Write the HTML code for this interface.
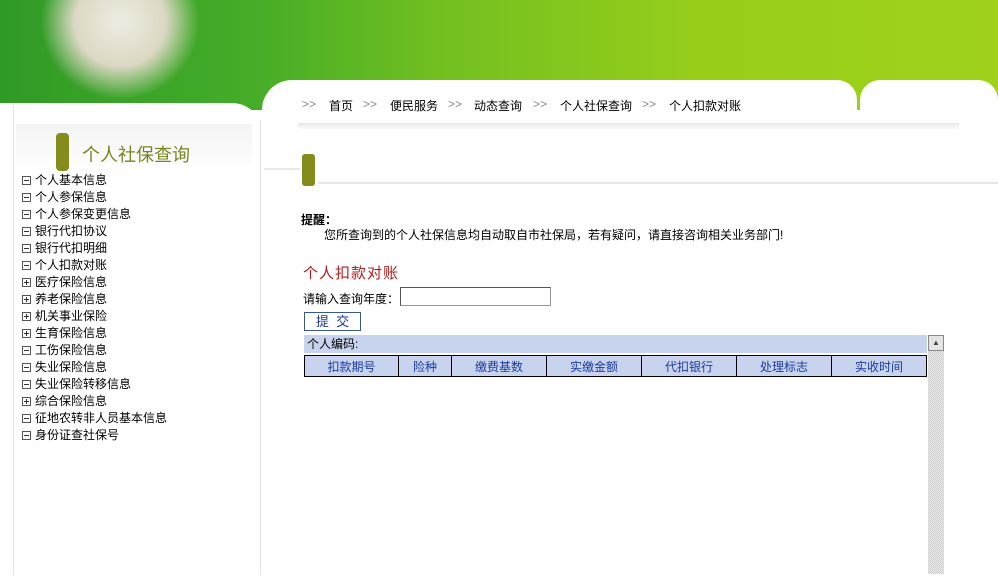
<!DOCTYPE html>
<html><head><meta charset="utf-8"><style>
body{margin:0;width:998px;height:574px;overflow:hidden;background:#fff;font-family:"Liberation Sans","Noto Sans CJK SC",sans-serif;font-size:12px;color:#000;position:relative}
.a{position:absolute}
.menu div{height:17px;line-height:17px;white-space:nowrap}
.bx{display:inline-block;margin-right:4px;vertical-align:-1px;position:relative;box-sizing:border-box;width:9px;height:9px;border:1px solid #555}
.bx:before{content:"";position:absolute;left:1px;right:1px;top:3px;height:1px;background:#333}
.p:after{content:"";position:absolute;top:1px;bottom:1px;left:3px;width:1px;background:#333}
table{border-collapse:collapse}
td{border:1px solid #000;background:#c8d4ee;color:#1a3aa0;text-align:center;height:20px;padding:0;font-size:12px}
.g{color:#888}
</style></head><body>
<div class="a" style="left:0;top:0;width:998px;height:110px;background:linear-gradient(90deg,#2f9a26 0%,#45ac28 25%,#74c020 45%,#96ce1a 70%,#a0d21c 100%)"></div>
<div class="a" style="left:40px;top:-20px;width:160px;height:120px;background:radial-gradient(ellipse at 50% 35%,#eeece2 0%,#dcd8c4 40%,rgba(200,190,160,0) 70%)"></div>
<div class="a" style="left:0;top:103px;width:262px;height:480px;background:#fff;border-top-right-radius:30px"></div>
<div class="a" style="left:262px;top:80px;width:595px;height:500px;background:#fff;border-top-left-radius:30px;border-top-right-radius:20px"></div>
<div class="a" style="left:860px;top:80px;width:138px;height:500px;background:#fff;border-top-left-radius:20px;border-top-right-radius:20px"></div>
<div class="a" style="left:262px;top:110px;width:736px;height:470px;background:#fff"></div>
<div class="a" style="left:13px;top:105px;width:1px;height:470px;background:#e4e4e4"></div>
<div class="a" style="left:260px;top:120px;width:1px;height:455px;background:#e4e4e4"></div>
<div class="a" style="left:16px;top:124px;width:236px;height:50px;background:linear-gradient(#f4f4f4,#fff)"></div>
<div class="a" style="left:56px;top:133px;width:13px;height:38px;background:#848c1c;border-radius:4px"></div>
<div class="a" style="left:82px;top:141px;font-size:18px;color:#7a8420">个人社保查询</div>
<div class="a menu" style="left:22px;top:172px">
<div><span class="bx"></span>个人基本信息</div><div><span class="bx"></span>个人参保信息</div><div><span class="bx"></span>个人参保变更信息</div><div><span class="bx"></span>银行代扣协议</div><div><span class="bx"></span>银行代扣明细</div><div><span class="bx"></span>个人扣款对账</div><div><span class="bx p"></span>医疗保险信息</div><div><span class="bx p"></span>养老保险信息</div><div><span class="bx p"></span>机关事业保险</div><div><span class="bx p"></span>生育保险信息</div><div><span class="bx"></span>工伤保险信息</div><div><span class="bx"></span>失业保险信息</div><div><span class="bx"></span>失业保险转移信息</div><div><span class="bx p"></span>综合保险信息</div><div><span class="bx"></span>征地农转非人员基本信息</div><div><span class="bx"></span>身份证查社保号</div>
</div>
<div class="a" style="left:302px;top:97px;white-space:nowrap;word-spacing:0"><span class="g">&gt;&gt;</span><span style="position:absolute;left:27px">首页</span><span class="g" style="position:absolute;left:61px">&gt;&gt;</span><span style="position:absolute;left:88px">便民服务</span><span class="g" style="position:absolute;left:146px">&gt;&gt;</span><span style="position:absolute;left:172px">动态查询</span><span class="g" style="position:absolute;left:231px">&gt;&gt;</span><span style="position:absolute;left:258px">个人社保查询</span><span class="g" style="position:absolute;left:340px">&gt;&gt;</span><span style="position:absolute;left:367px">个人扣款对账</span></div>
<div class="a" style="left:298px;top:123px;width:661px;height:6px;background:linear-gradient(#e8e8e8,#fafafa)"></div>
<div class="a" style="left:264px;top:168px;width:36px;height:2px;background:#e8e8e8"></div>
<div class="a" style="left:318px;top:182px;width:680px;height:2px;background:#e6e6e6"></div>
<div class="a" style="left:302px;top:154px;width:13px;height:32px;background:#848c1c;border-radius:3px"></div>
<div class="a" style="left:301px;top:211px;font-weight:bold">提醒：</div>
<div class="a" style="left:324px;top:226px;white-space:nowrap">您所查询到的个人社保信息均自动取自市社保局，若有疑问，请直接咨询相关业务部门!</div>
<div class="a" style="left:303px;top:262px;font-size:15px;color:#b02020;letter-spacing:1px">个人扣款对账</div>
<div class="a" style="left:303px;top:290px">请输入查询年度：</div>
<div class="a" style="left:400px;top:287px;width:149px;height:17px;border:1px solid #999;border-top-color:#555;border-left-color:#555"></div>
<div class="a" style="left:304px;top:312px;width:55px;height:17px;border:1px solid #3a5a80;background:#fff;color:#1a3aa0;text-align:center;line-height:17px;font-size:13px">提&nbsp;&nbsp;交</div>
<div class="a" style="left:304px;top:335px;width:623px;height:18px;background:#c8d4ee;line-height:18px;padding-left:3px;box-sizing:border-box">个人编码:</div>
<table class="a" style="left:304px;top:355px;width:623px">
<tr><td style="width:93px">扣款期号</td><td style="width:52px">险种</td><td style="width:94px">缴费基数</td><td style="width:94px">实缴金额</td><td style="width:94px">代扣银行</td><td style="width:94px">处理标志</td><td>实收时间</td></tr></table>
<div class="a" style="left:928px;top:335px;width:16px;height:239px;background:repeating-conic-gradient(#c8c8c8 0 25%,#f0f0f0 0 50%) 0 0/2px 2px"></div>
<div class="a" style="left:928px;top:335px;width:14px;height:14px;background:#e4e4e4;border:1px solid #888;font-size:8px;text-align:center;line-height:14px;color:#444">▲</div>
</body></html>
